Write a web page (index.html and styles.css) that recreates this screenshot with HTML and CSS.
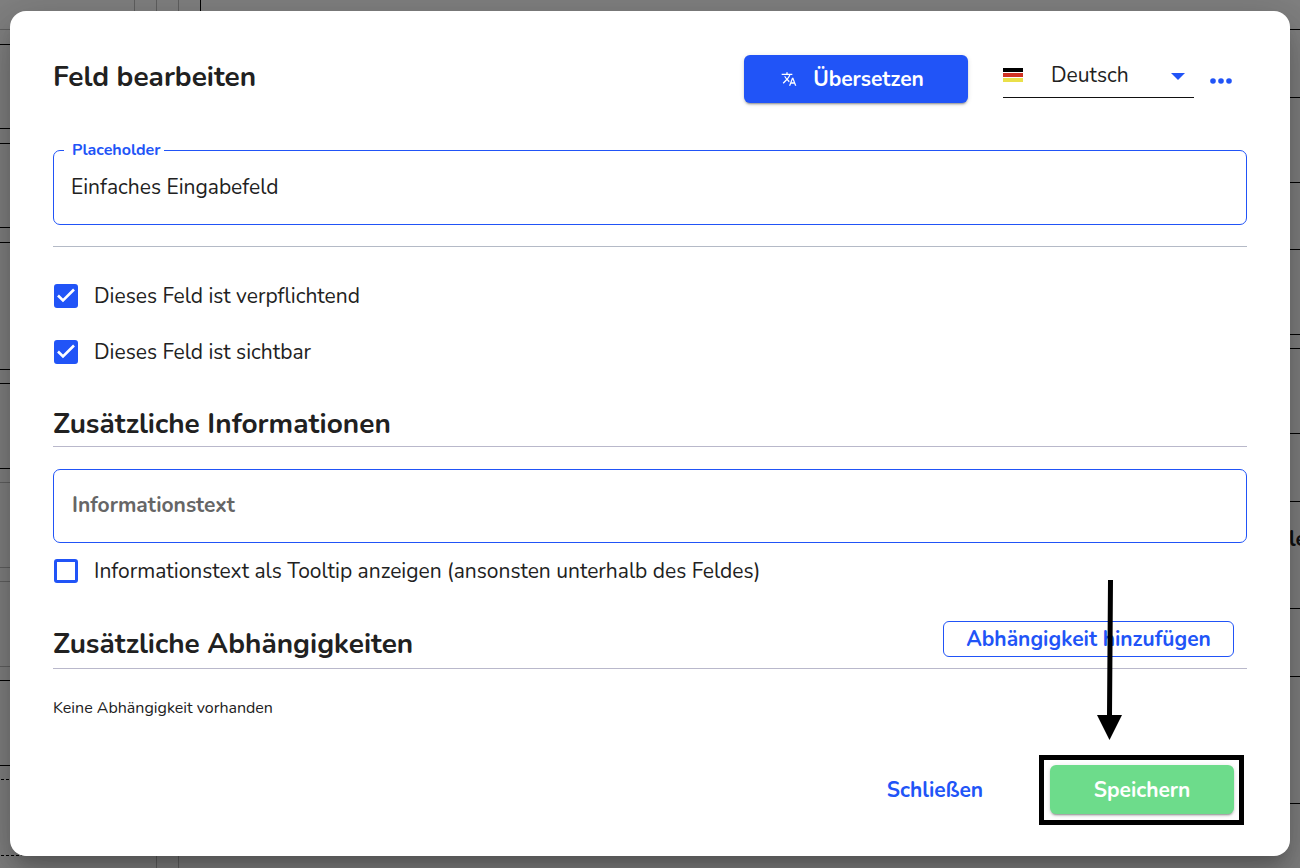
FILE: index.html
```html
<!DOCTYPE html>
<html lang="de">
<head>
<meta charset="utf-8">
<meta name="viewport" content="width=device-width, initial-scale=1">
<title>Feld bearbeiten</title>
<link rel="stylesheet" href="styles.css">
</head>
<body>
<div class="backdrop" aria-hidden="true">
  <svg class="backdrop-left" width="220" height="868">
    <path class="line-soft" d="M0 29.500H20M0 482.500H20M0 567.500H20M0 581.500H20M0 666.500H20M134.500 0V20M156.500 0V20M178.500 0V20M156.500 850V868M178.500 850V868"/>
    <path class="line" d="M0 44.500H20M0 128.500H20M0 143.500H20M0 227.500H20M0 242.500H20M0 369.500H20M0 383.500H20M0 468.500H20M0 680.500H20M0 765.500H20M200.500 0V20"/>
    <path class="line line-dashed" d="M1 779.500H20M1 855.500H24"/>
  </svg>
  <svg class="backdrop-right" width="20" height="868">
    <path class="line" d="M0 29.500H20M0 97.500H20M0 182.500H20M0 249.500H20M0 334.500H20M0 348.500H20M0 433.500H20M0 501.500H20M0 608.500H20M0 676.500H20M0 803.500H20"/>
    <text class="backdrop-text" x="9" y="546">le</text>
  </svg>
</div>
<main class="dialog" role="dialog" aria-labelledby="dialog-title">
  <header class="header">
    <h1 class="title" id="dialog-title">Feld bearbeiten</h1>
    <button class="button button-primary" type="button">
      <svg class="translate-icon" viewBox="0 0 24 24" width="16" height="16" aria-hidden="true"><path fill="currentColor" d="M12.870 15.070l-2.540-2.510.030-.030A17.520 17.520 0 0 0 14.070 6H17V4h-7V2H8v2H1v2h11.170C11.500 7.920 10.440 9.750 9 11.350 8.070 10.320 7.300 9.190 6.690 8h-2c.730 1.630 1.730 3.170 2.980 4.560l-5.090 5.020L4 19l5-5 3.110 3.110.760-2.040zM18.500 10h-2L12 22h2l1.120-3h4.750L21 22h2l-4.500-12zm-2.620 7l1.620-4.330L19.120 17h-3.240z"/></svg>
      Übersetzen
    </button>
    <div class="language">
      <svg class="flag" width="20" height="14" aria-hidden="true"><path d="M0 0H20V4H0z"/><path fill="#d03224" d="M0 5H20V9H0z"/><path fill="#eae04a" d="M0 10H20V14H0z"/></svg>
      <select class="language-select" aria-label="Sprache"><option>Deutsch</option><option>Englisch</option></select>
      <svg class="caret" width="14" height="7" aria-hidden="true"><path fill="currentColor" d="M0 0H14L7 7z"/></svg>
    </div>
    <button class="more" type="button" aria-label="Mehr">
      <svg width="22" height="6" aria-hidden="true"><g fill="currentColor"><circle cx="3" cy="3" r="2.800"/><circle cx="11" cy="3" r="2.800"/><circle cx="19" cy="3" r="2.800"/></g></svg>
    </button>
  </header>

  <fieldset class="field">
    <legend class="field-legend"><label for="placeholder">Placeholder</label></legend>
    <input class="field-input" id="placeholder" type="text" value="Einfaches Eingabefeld">
  </fieldset>

  <div class="checks">
    <label class="check"><input class="check-box" type="checkbox" checked>Dieses Feld ist verpflichtend</label>
    <label class="check"><input class="check-box" type="checkbox" checked>Dieses Feld ist sichtbar</label>
  </div>

  <div class="section-head">
    <h2 class="title">Zusätzliche Informationen</h2>
  </div>
  <input class="info-input" type="text" placeholder="Informationstext" aria-label="Informationstext">
  <label class="check"><input class="check-box" type="checkbox">Informationstext als Tooltip anzeigen (ansonsten unterhalb des Feldes)</label>

  <div class="section-head section-head-action">
    <h2 class="title">Zusätzliche Abhängigkeiten</h2>
    <button class="button button-outline" type="button">Abhängigkeit hinzufügen</button>
  </div>
  <p class="empty">Keine Abhängigkeit vorhanden</p>

  <footer class="actions">
    <button class="button button-text" type="button">Schließen</button>
    <div class="highlight">
      <svg class="arrow" width="26" height="160" aria-hidden="true"><path d="M11 0H16L15 135H25L12.500 160L0 135H10z"/></svg>
      <button class="button button-save" type="button">Speichern</button>
    </div>
  </footer>
</main>
</body>
</html>
```
FILE: styles.css
```css
* { box-sizing: border-box; }

body {
  margin: 0;
  min-height: 100vh;
  padding: 11px 10px 12px;
  background: #808080;
  color: #212121;
  font: 21px/28px Nunito, "Open Sans", sans-serif;
  overflow-x: hidden;
}

button, input, select { font: inherit; color: inherit; margin: 0; }
button { cursor: pointer; }

.backdrop { position: absolute; inset: 0; overflow: hidden; }
.backdrop-left { position: absolute; left: 0; top: 0; }
.backdrop-right { position: absolute; right: 0; top: 0; }
.line, .line-soft { fill: none; stroke: #000; }
.line-soft { stroke: #606060; }
.line-dashed { stroke-dasharray: 3 2; }
.backdrop-text { font-size: 21px; font-weight: 700; fill: #111; }

.dialog {
  position: relative;
  display: flex;
  flex-direction: column;
  padding: 44px 43px 31px;
  border-radius: 16px;
  background: #fff;
  box-shadow: 0 11px 15px -7px rgba(0, 0, 0, .2), 0 24px 38px 3px rgba(0, 0, 0, .14), 0 9px 46px 8px rgba(0, 0, 0, .12);
}

.header { display: flex; align-items: flex-start; padding-right: 15px; }
.title { margin: 0; flex: 1; font-size: 28px; line-height: 36px; font-weight: 700; }
.header .title { line-height: 44px; }

.button {
  display: flex;
  align-items: center;
  justify-content: center;
  height: 48px;
  padding: 0;
  border: 0;
  border-radius: 6px;
  background: none;
  font-weight: 700;
}
.button-primary, .button-save {
  color: #fff;
  box-shadow: 0 3px 1px -2px rgba(0, 0, 0, .2), 0 2px 2px rgba(0, 0, 0, .14), 0 1px 5px rgba(0, 0, 0, .12);
}
.button-primary { width: 224px; gap: 16px; padding-right: 7px; background: #2154f7; }
.button-save { width: 184px; height: 49px; background: #6ddc8b; }
.button-text { width: 140px; color: #2154f7; }
.button-outline { width: 291px; height: 36px; border: 1px solid #2154f7; color: #2154f7; }

.language {
  position: relative;
  width: 191px;
  height: 43px;
  margin-left: 35px;
  border-bottom: 1px solid #111;
}
.language-select {
  width: 100%;
  height: 40px;
  padding: 0 30px 0 48px;
  border: 0;
  background: none;
  appearance: none;
}
.flag { position: absolute; left: 0; top: 13px; }
.caret { position: absolute; right: 9px; top: 18px; color: #2154f7; pointer-events: none; }
.more {
  display: flex;
  align-items: center;
  height: 52px;
  margin-left: 16px;
  padding: 0;
  border: 0;
  background: none;
  color: #2154f7;
}

.field {
  min-width: 0;
  height: 85px;
  margin: 33px 0 0;
  padding: 0 18px 0 10px;
  border: 1px solid #2154f7;
  border-radius: 7px;
}
.field-legend {
  padding: 0 3px 0 8px;
  color: #2154f7;
  font-size: 16px;
  line-height: 20px;
  font-weight: 700;
}
.field-input {
  display: block;
  width: 100%;
  height: 54px;
  padding: 0 0 0 7px;
  border: 0;
  outline: 0;
  background: none;
}

.checks {
  display: flex;
  flex-direction: column;
  gap: 28px;
  margin-top: 21px;
  padding-top: 35px;
  border-top: 1px solid #b4bac6;
}
.check { display: flex; align-items: center; gap: 16px; padding-left: 1px; }
.check-box {
  appearance: none;
  flex: none;
  width: 24px;
  height: 24px;
  margin: 0;
  border: 3px solid #2154f7;
  border-radius: 3px;
}
.check-box:checked {
  background: #2154f7 url("data:image/svg+xml,%3Csvg xmlns='http://www.w3.org/2000/svg' viewBox='0 0 18 18'%3E%3Cpath d='M1 8.500l5 5L17 2.500' fill='none' stroke='white' stroke-width='2.600'/%3E%3C/svg%3E") center / 18px 18px no-repeat;
}

.section-head {
  display: flex;
  align-items: center;
  margin-top: 40px;
  padding-bottom: 4px;
  border-bottom: 1px solid #b9b8cb;
}
.section-head-action { margin-top: 36px; padding: 0 13px 11px 0; }
.section-head-action .title { padding-top: 5px; margin-bottom: -5px; }

.info-input {
  width: 100%;
  height: 74px;
  margin: 22px 0 14px;
  padding: 0 18px 2px;
  border: 1px solid #2154f7;
  border-radius: 7px;
  outline: 0;
}
.info-input::placeholder { color: #666; opacity: 1; font-weight: 700; }

.empty { margin: 29px 0 0; font-size: 16px; line-height: 20px; }

.actions {
  display: flex;
  align-items: center;
  justify-content: flex-end;
  gap: 34px;
  margin-top: 37px;
  padding-right: 3px;
}
.highlight { position: relative; padding: 5px 5px 6px 6px; border: 5px solid #000; }
.arrow { position: absolute; left: 53px; bottom: calc(100% + 20px); pointer-events: none; }
```
